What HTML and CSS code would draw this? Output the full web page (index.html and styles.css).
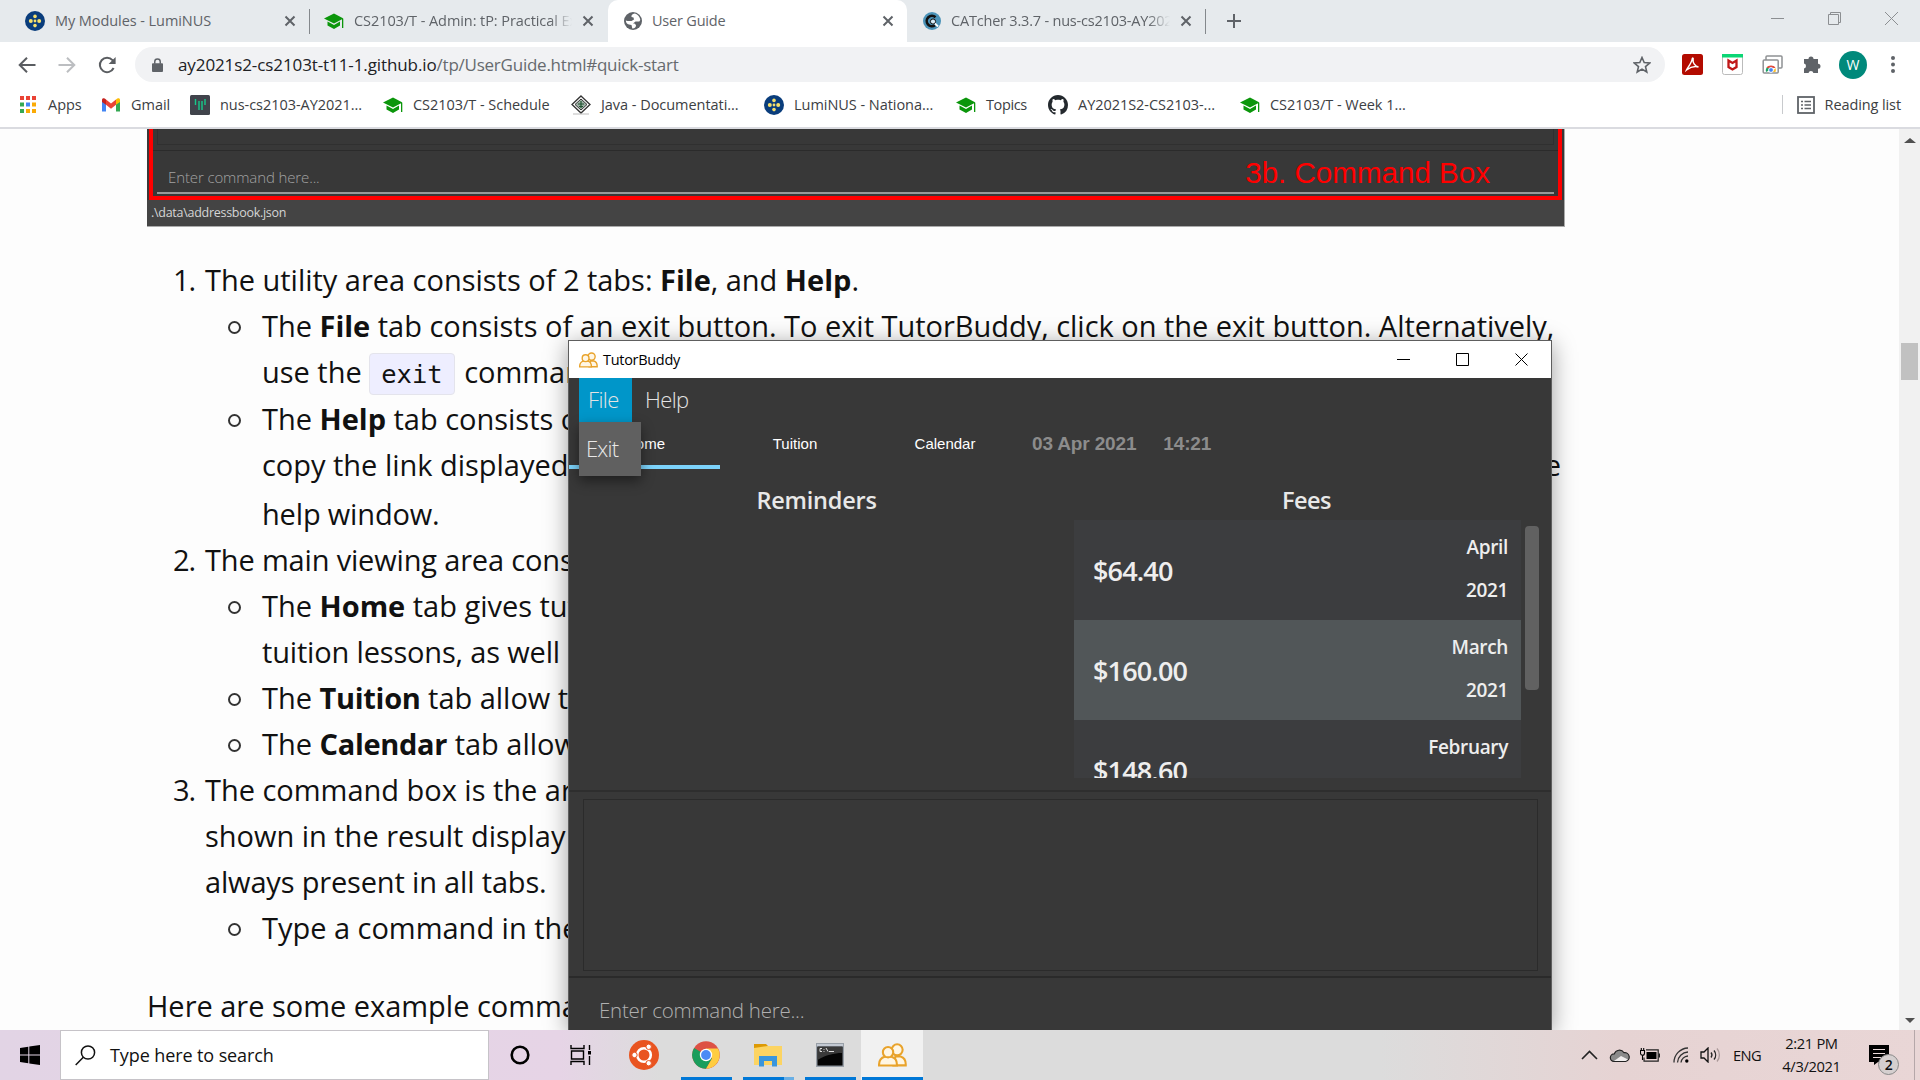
FILE: index.html
```html
<!DOCTYPE html>
<html lang="en">
<head>
<meta charset="utf-8">
<title>User Guide</title>
<link rel="stylesheet" href="styles.css">
</head>
<body>
<svg class="defs" width="0" height="0">
  <symbol id="lumi" viewBox="0 0 20 20"><circle cx="10" cy="10" r="10" fill="#0a3d7c"/><g fill="#f7e06a"><circle cx="10" cy="5.4" r="1.8"/><circle cx="10" cy="14.6" r="1.8"/><circle cx="10" cy="10" r="1.4"/><circle cx="5.8" cy="10" r="2"/><circle cx="14.2" cy="10" r="2"/></g></symbol>
  <symbol id="cap" viewBox="0 0 20 20"><g fill="#0b960b"><path d="M0 7.500 10 2.500l9.500 5L10 12.500z"/><path d="M3.500 10.500v4L10 18l6-3.500v-4L10 14z"/><path d="M18 8h1.300v9H18z"/></g></symbol>
  <symbol id="x" viewBox="0 0 12 12"><path d="M1.500 1.500l9 9M10.500 1.500l-9 9" stroke="#5f6368" stroke-width="2" fill="none"/></symbol>
  <symbol id="people" viewBox="0 0 28 23"><g fill="#fff6e4" stroke="#e9a32b" stroke-width="2"><path d="M15 21.500h11.800c.2-4.500-1.500-7.500-5-8.500h-5z"/><circle cx="18.500" cy="6.500" r="5.300"/><path d="M1 21.700c-.2-5 1.500-7.500 5.500-8.500h6.500c4 1 5.500 3.500 5.300 8.500z"/><circle cx="9.700" cy="8.800" r="5"/></g></symbol>
</svg>

<header class="chrome">
  <div class="tabs">
    <div class="tab t1"><svg class="i20"><use href="#lumi"/></svg><span class="lbl">My Modules - LumiNUS</span><svg class="x"><use href="#x"/></svg></div>
    <i class="sep"></i>
    <div class="tab t2"><svg class="i20"><use href="#cap"/></svg><span class="lbl fade">CS2103/T - Admin: tP: Practical Exam</span><svg class="x"><use href="#x"/></svg></div>
    <div class="tab active"><svg class="i18" viewBox="0 0 18 18"><circle cx="9" cy="9" r="9" fill="#5f6368"/><path d="M10.500 1.500C8.500 2 7 3.200 7.500 5l2 .5.500 2L7.500 9H3.500L1.800 8.500C2 11 3 12 5 12.500l2.500.5.800 3.500C11 16.500 12 15 12 13l-1.500-1.500H9l2.500-2h3.800l1-1.500C16 5 13.500 2 10.500 1.500z" fill="#fff"/></svg><span class="lbl">User Guide</span><svg class="x"><use href="#x"/></svg></div>
    <div class="tab t4"><svg class="i18" viewBox="0 0 18 18"><circle cx="9" cy="9" r="9" fill="#4b93b8"/><path d="M12.500 5.200A5.200 5.200 0 1 0 12 13.200" fill="none" stroke="#111" stroke-width="2.600"/><circle cx="10" cy="9.500" r="2.600" fill="#d7ecf7" stroke="#111" stroke-width="1"/><path d="M12 11.500l3 3" stroke="#fff" stroke-width="1.800"/></svg><span class="lbl fade">CATcher 3.3.7 - nus-cs2103-AY2021</span><svg class="x"><use href="#x"/></svg></div>
    <i class="sep"></i>
    <svg class="plus" viewBox="0 0 16 16"><path d="M8 1v14M1 8h14" stroke="#5f6368" stroke-width="2"/></svg>
    <div class="winctl">
      <svg viewBox="0 0 13 13"><path d="M0 6.500h13" stroke="#8c8f92"/></svg>
      <svg viewBox="0 0 13 13"><path d="M.5 2.500h10v10H.5zM2.500 2.500v-2h10v10h-2" fill="none" stroke="#8c8f92"/></svg>
      <svg viewBox="0 0 13 13"><path d="M0 0l13 13M13 0L0 13" stroke="#8c8f92"/></svg>
    </div>
  </div>
  <div class="toolbar">
    <div class="nav">
      <svg viewBox="0 0 18 18"><path d="M17.500 9H2M9 1.700L1.700 9 9 16.300" fill="none" stroke="#5a5d61" stroke-width="2"/></svg>
      <svg viewBox="0 0 18 18"><path d="M.5 9H16M9 1.700L16.300 9 9 16.300" fill="none" stroke="#bcbec1" stroke-width="2"/></svg>
      <svg viewBox="0 0 18 18"><path d="M15.600 12A7.200 7.200 0 1 1 14.500 4.200L16 6" fill="none" stroke="#5a5d61" stroke-width="2"/><path d="M17.600 1v7h-7z" fill="#5a5d61"/></svg>
    </div>
    <div class="omnibox">
      <svg class="lock" viewBox="0 0 12 15"><path d="M1 5.500h10a1 1 0 0 1 1 1V14a1 1 0 0 1-1 1H1a1 1 0 0 1-1-1V6.500a1 1 0 0 1 1-1z" fill="#5f6368"/><path d="M3 6V4a3 3 0 0 1 6 0v2" fill="none" stroke="#5f6368" stroke-width="1.600"/></svg>
      <span class="url"><b>ay2021s2-cs2103t-t11-1.github.io</b><span>/tp/UserGuide.html#quick-start</span></span>
      <svg class="star" viewBox="0 0 18 18"><path d="M9 1.500l2.200 5 5.500.5-4.200 3.600 1.300 5.400L9 13.100 4.200 16l1.300-5.400L1.300 7l5.500-.5z" fill="none" stroke="#5f6368" stroke-width="1.600"/></svg>
    </div>
    <div class="ext">
      <svg viewBox="0 0 21 21"><rect width="21" height="21" rx="2.500" fill="#b30b00"/><path d="M4.500 16c1-2.500 5-6.500 5.700-11 .2-1.500 1.300-1 .9.500-.6 3 2 7 5.400 7.500-3-.8-8 0-12 3z" fill="none" stroke="#fff" stroke-width="1.500"/></svg>
      <svg viewBox="0 0 21 21"><rect x=".5" y=".5" width="20" height="20" rx="2" fill="#fff" stroke="#bbb"/><path d="M0 0h21v3.500H0z" fill="#0bd675"/><path d="M6.500 6.500v6.500l4 2.500 4-2.500V6.500l-4 2.500z" fill="none" stroke="#c01818" stroke-width="2.300"/></svg>
      <svg viewBox="0 0 21 21"><g fill="#fff" stroke="#8f9194" stroke-width="1.500"><rect x="4" y="2" width="16" height="12" rx="1"/><rect x="1.200" y="6" width="15" height="13" rx="1"/></g><path d="M4 18a5 5 0 0 1 2-5.500l3 3z" fill="#1ea362"/><path d="M4.500 14a5.200 5.200 0 0 1 9 0z" fill="#e14b3c"/><path d="M13.500 14a5 5 0 0 1 0 4H10z" fill="#fbc02d"/><circle cx="9" cy="16" r="2.400" fill="#4285f4" stroke="#fff"/></svg>
      <svg viewBox="0 0 21 21"><path d="M2 5h4.500a2.500 2.500 0 1 1 5 0H16v4.700a2.500 2.500 0 1 1 0 5V19h-4.600a2.500 2.500 0 0 0-4.900 0H2v-4.600a2.500 2.500 0 0 0 0-4.900z" fill="#5f6368"/></svg>
      <span class="avatar">W</span>
      <svg viewBox="0 0 21 21"><g fill="#5f6368"><circle cx="11" cy="4" r="2"/><circle cx="11" cy="10.500" r="2"/><circle cx="11" cy="17" r="2"/></g></svg>
    </div>
  </div>
  <div class="bookmarks">
    <div class="bm"><svg class="i20" viewBox="0 0 20 20"><g fill="#ea4335"><path d="M2 1h4v4H2zM8 1h4v4H8zM14 1h4v4h-4z"/></g><g fill="#34a853"><path d="M2 7.500h4v4H2zM2 14h4v4H2z"/></g><path d="M8 7.500h4v4H8z" fill="#4285f4"/><path d="M14 7.500h4v4h-4zM8 14h4v4H8zM14 14h4v4h-4z" fill="#fbab05"/></svg><span>Apps</span></div>
    <div class="bm"><svg class="i20" viewBox="0 0 20 20"><path d="M1 5v11.500h4V9z" fill="#4285f4"/><path d="M15 9v7.500h4V5z" fill="#34a853"/><path d="M5 4.500l5 4 5-4v5.200l-5 4-5-4z" fill="#ea4335"/><path d="M1 5c0-2.200 2.300-2.500 4-.5v5.200L1 7z" fill="#c5221f"/><path d="M19 5c0-2.200-2.300-2.500-4-.5v5.200L19 7z" fill="#fbbc04"/></svg><span>Gmail</span></div>
    <div class="bm"><svg class="i20" viewBox="0 0 20 20"><rect width="20" height="20" rx="1.500" fill="#40434b"/><path d="M5.500 4v6M9 6v9M12 6v9M15 4v6" stroke="#18c98a" stroke-width="1.400"/></svg><span>nus-cs2103-AY2021...</span></div>
    <div class="bm"><svg class="i20"><use href="#cap"/></svg><span>CS2103/T - Schedule</span></div>
    <div class="bm"><svg class="i20" viewBox="0 0 20 20"><path d="M10 1l9 8.500-9 8.500-9-8.500z" fill="#fff" stroke="#333" stroke-width="1.300"/><path d="M10 4l6 5.500-6 5.500-6-5.500z" fill="#9fb0a6" stroke="#333"/><path d="M7 9h6M8 11.500h4M10 6v7" stroke="#253" stroke-width="1.200"/><path d="M2 19h16" stroke="#bbb"/></svg><span>Java - Documentati...</span></div>
    <div class="bm"><svg class="i20"><use href="#lumi"/></svg><span>LumiNUS - Nationa...</span></div>
    <div class="bm"><svg class="i20"><use href="#cap"/></svg><span class="tight">Topics</span></div>
    <div class="bm"><svg class="i20" viewBox="0 0 16 16"><path fill="#24292e" d="M8 0C3.580 0 0 3.580 0 8c0 3.540 2.290 6.530 5.470 7.590.4.070.55-.17.55-.38 0-.19-.01-.82-.01-1.490-2.010.37-2.530-.49-2.690-.94-.09-.23-.48-.94-.82-1.130-.28-.15-.68-.52-.01-.53.63-.01 1.080.58 1.230.82.72 1.210 1.870.87 2.330.66.070-.52.28-.87.51-1.070-1.780-.2-3.640-.89-3.640-3.950 0-.87.31-1.590.82-2.150-.08-.2-.36-1.020.08-2.120 0 0 .67-.21 2.200.82.64-.18 1.320-.27 2-.27s1.360.09 2 .27c1.530-1.040 2.200-.82 2.200-.82.44 1.100.16 1.920.08 2.120.51.56.82 1.270.82 2.150 0 3.070-1.870 3.750-3.650 3.950.29.25.54.73.54 1.480 0 1.070-.01 1.930-.01 2.200 0 .21.15.46.55.38A8.010 8.010 0 0 0 16 8c0-4.420-3.580-8-8-8z"/></svg><span>AY2021S2-CS2103-...</span></div>
    <div class="bm"><svg class="i20"><use href="#cap"/></svg><span>CS2103/T - Week 1...</span></div>
    <div class="reading"><svg viewBox="0 0 18 18"><rect x="1" y="1" width="16" height="16" fill="none" stroke="#5f6368" stroke-width="1.800"/><path d="M4 5.500h2M4 9h2M4 12.500h2M7.500 5.500H14M7.500 9H14M7.500 12.500H14" stroke="#5f6368" stroke-width="1.500"/></svg><span>Reading list</span></div>
  </div>
</header>

<main class="page">
  <article class="guide">
    <div class="shot">
      <div class="shot-top">
        <div class="shot-result"></div>
        <div class="shot-cmd"><span class="shot-prompt">Enter command here...</span><span class="shot-label">3b. Command Box</span></div>
      </div>
      <div class="shot-status">.\data\addressbook.json</div>
    </div>
    <div class="list">
      <p class="l1"><i class="num">1.</i>The utility area consists of 2 tabs: <strong>File</strong>, and <strong>Help</strong>.</p>
      <p class="l2"><i class="dot"></i>The <strong>File</strong> tab consists of an exit button. To exit TutorBuddy, click on the exit button. Alternatively,</p>
      <p class="l2">use the <code>exit</code> command.</p>
      <p class="l2 gap1"><i class="dot"></i>The <strong>Help</strong> tab consists of</p>
      <p class="l2 spread"><span>copy the link displayed</span><span>the</span></p>
      <p class="l2 gap3 snug">help window.</p>
      <p class="l1 snug"><i class="num">2.</i>The main viewing area consists</p>
      <p class="l2"><i class="dot"></i>The <strong>Home</strong> tab gives tutors</p>
      <p class="l2 snug">tuition lessons, as well</p>
      <p class="l2"><i class="dot"></i>The <strong class="c">Tuition</strong> tab allow tutors</p>
      <p class="l2"><i class="dot"></i>The <strong class="c">Calendar</strong> tab allows</p>
      <p class="l1"><i class="num">3.</i>The command box is the area</p>
      <p class="l1">shown in the result display</p>
      <p class="l1 snug">always present in all tabs.</p>
      <p class="l2"><i class="dot"></i>Type a command in the</p>
    </div>
    <p class="after">Here are some example commands</p>
  </article>
  <aside class="scroll"><i class="up"></i><i class="thumb"></i><i class="down"></i></aside>
</main>

<section class="app">
  <div class="titlebar"><svg class="people"><use href="#people"/></svg><span>TutorBuddy</span>
    <div class="appctl">
      <svg viewBox="0 0 13 13"><path d="M0 6.500h13" stroke="#000"/></svg>
      <svg viewBox="0 0 13 13"><path d="M.5.5h12v12H.5z" fill="none" stroke="#000"/></svg>
      <svg viewBox="0 0 13 13"><path d="M.5.500l12 12M12.500.5l-12 12" stroke="#000"/></svg>
    </div>
  </div>
  <div class="menubar"><span class="file">File</span><span class="help">Help</span></div>
  <div class="apptabs"><span class="at on">Home</span><span class="at">Tuition</span><span class="at">Calendar</span><b>03 Apr 2021</b><b>14:21</b></div>
  <div class="panes">
    <div class="pane"><h2>Reminders</h2></div>
    <div class="pane fees"><h2>Fees</h2>
      <div class="feewrap">
        <div class="feelist">
          <div class="fee"><b>$64.40</b><div><span>April</span><span>2021</span></div></div>
          <div class="fee alt"><b>$160.00</b><div><span>March</span><span>2021</span></div></div>
          <div class="fee"><b>$148.60</b><div><span>February</span><span>2021</span></div></div>
        </div>
        <i class="bar"></i>
      </div>
    </div>
  </div>
  <div class="result"><div></div></div>
  <div class="cmd">Enter command here...</div>
  <div class="menu">Exit</div>
</section>

<footer class="taskbar">
  <div class="start"><svg viewBox="0 0 20 20"><path d="M0 3l8.300-1.200v7.700H0zM9.300 1.600L20 0v9.500H9.300zM0 10.500h8.300v7.700L0 17zM9.300 10.500H20V20L9.300 18.400z"/></svg></div>
  <div class="search"><svg viewBox="0 0 21 21"><circle cx="13" cy="7.500" r="6.600" fill="none" stroke="#111" stroke-width="1.500"/><path d="M8.300 12.300L.7 20" stroke="#111" stroke-width="1.500"/></svg><span>Type here to search</span></div>
  <div class="apps">
    <div class="ico cort"><svg width="20" height="20" viewBox="0 0 20 20"><circle cx="10" cy="10" r="8.300" fill="none" stroke="#000" stroke-width="2.600"/></svg></div>
    <div class="ico"><svg width="22" height="20" viewBox="0 0 22 20"><path d="M1 0v3.500h13V0M1.500 6h12v8h-12zM1 20v-3.500h13V20M19.500 0v5M19.500 11v9" fill="none" stroke="#000" stroke-width="1.400"/><path d="M18 6h3v3.500h-3z"/></svg></div>
    <div class="ico ubu"><svg width="30" height="30" viewBox="0 0 30 30"><circle cx="15" cy="15" r="15" fill="#e95420"/><circle cx="15" cy="15" r="6.800" fill="none" stroke="#fff" stroke-width="2.600"/><g fill="#fff" stroke="#e95420" stroke-width="1"><circle cx="5.500" cy="15" r="2.700"/><circle cx="19.700" cy="6.800" r="2.700"/><circle cx="19.700" cy="23.200" r="2.700"/></g></svg></div>
    <div class="ico run"><svg width="28" height="28" viewBox="0 0 28 28"><circle cx="14" cy="14" r="13.800" fill="#dd5144"/><path d="M14 14L2.100 7A13.800 13.800 0 0 0 14 27.800l6-10.300z" fill="#1a9e5c"/><path d="M14 27.800A13.800 13.800 0 0 0 26 7.500H14l6 10z" fill="#ffcd41"/><circle cx="14" cy="14" r="6.200" fill="#fff"/><circle cx="14" cy="14" r="4.900" fill="#4c8bf5"/></svg></div>
    <div class="ico run two"><svg width="28" height="24" viewBox="0 0 28 24"><path d="M0 1h12l2 2v5H0z" fill="#dd9a05"/><path d="M0 5l14-2h14v19H0z" fill="#fcd462"/><path d="M5 23.500V13h18v10.500h-5V18h-8v5.500z" fill="#3a96dd"/></svg></div>
    <div class="ico run"><svg width="28" height="24" viewBox="0 0 28 24"><rect x=".7" y=".7" width="26.600" height="22.600" fill="#050505" stroke="#99a0a8" stroke-width="1.500"/><path d="M1 1h26v2.500H1z" fill="#c3c9d2"/><path d="M1.500 4H26v6C18 10 10 12 1.500 17z" fill="#3a3a3a"/><path d="M6 5.500H4v3h2M8 6v.8M8 8v.8M10 5l2 3.500M13 8.500h5" stroke="#ddd" fill="none"/></svg></div>
    <div class="ico run cur"><svg width="29" height="24"><use href="#people"/></svg></div>
  </div>
  <div class="tray">
    <svg class="chev" viewBox="0 0 17 10"><path d="M1 9l7.500-7.500L16 9" fill="none" stroke="#222" stroke-width="1.600"/></svg>
    <svg class="cloud" viewBox="0 0 20 15"><path d="M4.500 13.500a3.800 3.800 0 0 1 .3-7.600 5.400 5.400 0 0 1 9.700-1.200 4.400 4.400 0 0 1 1.500 8.800z" fill="#8b8b8b" stroke="#222" stroke-width="1.200"/><path d="M4.500 13l7-5 7 3.500-2.500 1.500z" fill="#f1eeee"/></svg>
    <svg class="batt" viewBox="0 0 20 14"><path d="M6.500 4h10v7h-10z"/><path d="M6 1.800h12.200v11.400H4V9.500M19.500 5.500v4" fill="none" stroke="#222" stroke-width="1.200"/><path d="M.5 2.500h4v2.700a2 2 0 0 1-4 0zM1.300 0v2.500M3.700 0v2.500M2.500 7.500v4.500" fill="#e6d4d4" stroke="#000" stroke-width="1.100"/></svg>
    <svg class="wifi" viewBox="0 0 16 16"><g fill="none" stroke="#333" stroke-width="1.300"><path d="M1 15.500A14.500 14.500 0 0 1 15 1"/><path d="M4.500 15.500A11 11 0 0 1 15 5"/><path d="M8 15.500A7.500 7.500 0 0 1 15 9"/></g><circle cx="13.800" cy="14" r="1.700"/></svg>
    <svg class="vol" viewBox="0 0 21 16"><path d="M1 5h3l4-4v14l-4-4H1z" fill="none" stroke="#111" stroke-width="1.300"/><path d="M11 5.500a4 4 0 0 1 0 5M14 3.500a7 7 0 0 1 0 9" fill="none" stroke="#222" stroke-width="1.300"/><path d="M17 1.500a10 10 0 0 1 0 13" fill="none" stroke="#a99" stroke-width="1.300"/></svg>
    <span class="eng">ENG</span>
    <div class="clock"><span>2:21 PM</span><span>4/3/2021</span></div>
    <div class="note"><svg viewBox="0 0 20 20"><path d="M0 0h20v17H9l-4 3v-3H0z"/><path d="M4 4.500h12M4 8.500h12M4 12.500h8" stroke="#eadada" stroke-width="1.200"/></svg><b>2</b></div>
  </div>
</footer>
</body>
</html>
```
FILE: styles.css
```css
* { box-sizing: border-box; }
body {
  margin: 0;
  width: 1920px;
  height: 1080px;
  overflow: hidden;
  position: relative;
  display: flex;
  flex-direction: column;
  font-family: "Open Sans", "Noto Sans", sans-serif;
  color: #111;
  background: #fdfdfd;
}
p, h2 { margin: 0; }
svg { display: block; flex: none; }
i { font-style: normal; }
.defs { display: none; }
.i20 { width: 20px; height: 20px; }
.i18 { width: 18px; height: 18px; }

/* browser chrome */
.chrome { height: 129px; flex: none; background: #fff; border-bottom: 2px solid #dadbe0; font-size: 14.5px; white-space: nowrap; }
.tabs { height: 42px; background: #e6eaed; display: flex; align-items: center; color: #5f6368; }
.tab { height: 42px; padding-bottom: 1px; display: flex; align-items: center; gap: 10px; }
.tab .lbl { flex: 1; overflow: hidden; letter-spacing: -.07px; }
.tab .fade { mask-image: linear-gradient(90deg, #000 90%, transparent 100%); }
.x { width: 12px; height: 12px; }
.t1 { width: 309px; padding-left: 25px; padding-right: 13px; }
.t2 { width: 298px; padding-left: 14px; padding-right: 14px; }
.active { width: 299px; padding-left: 16px; padding-right: 13px; background: #fff; border-radius: 10px 10px 0 0; }
.t4 { width: 298px; padding-left: 16px; padding-right: 13px; }
.t4 .lbl, .active .lbl { letter-spacing: -.2px; }
.sep { width: 1px; height: 25px; background: #84888c; }
.plus { width: 16px; height: 16px; margin-left: 20px; }
.winctl { margin-left: auto; display: flex; gap: 44px; padding-right: 22px; margin-top: -6px; }
.winctl svg { width: 13px; height: 13px; }

.toolbar { height: 45px; display: flex; align-items: center; }
.nav { width: 135px; padding-left: 18px; display: flex; gap: 22px; }
.nav svg { width: 18px; height: 18px; }
.omnibox { width: 1530px; height: 35px; border-radius: 18px; background: #f1f2f4; display: flex; align-items: center; padding: 0 14px 0 17px; }
.lock { width: 11px; height: 14px; }
.url { margin-left: 15px; flex: 1; font-size: 17px; color: #666a6e; letter-spacing: -.24px; }
.url b { font-weight: 400; color: #202124; letter-spacing: -.1px; }
.star { width: 18px; height: 18px; }
.ext { display: flex; align-items: center; gap: 19px; margin-left: 17px; }
.ext svg { width: 21px; height: 21px; }
.avatar { width: 28px; height: 28px; margin: 0 -4px 0 -3px; border-radius: 50%; background: #00897b; color: #fff; font-size: 14px; line-height: 28px; text-align: center; }

.bookmarks { height: 35px; padding-left: 18px; display: grid; grid-template-columns: 83px 89px 193px 188px 193px 192px 92px 192px 1fr auto; align-items: center; color: #3c4043; }
.bm { display: flex; align-items: center; gap: 10px; letter-spacing: -.04px; }
.bm .tight { letter-spacing: -.4px; }
.reading { display: flex; align-items: center; gap: 10px; border-left: 1px solid #c8cacd; padding: 0 19px 0 14px; letter-spacing: -.1px; }
.reading svg { width: 18px; height: 18px; }

/* page */
.page { flex: 1; min-height: 0; overflow: hidden; display: flex; justify-content: space-between; }
.guide { padding-left: 147px; font-size: 29px; line-height: 46px; white-space: nowrap; letter-spacing: -.02px; }
.shot { width: 1418px; height: 98px; background: #383838; border: solid #aaa; border-width: 0 1px 1px 0; }
.shot-top { height: 71px; margin: 0 2px; border: 4px solid #f00; border-top: 0; padding: 0 4px; }
.shot-result { height: 16px; border: 1px solid #303030; border-top: 0; }
.shot-cmd { height: 44px; margin: 5px -4px 0; padding: 8px 68px 0 15px; display: flex; justify-content: space-between; align-items: center; border-top: 1px solid #2b2b2b; background: linear-gradient(#999, #999) center bottom / calc(100% - 8px) 2px no-repeat; }
.shot-prompt { font-size: 15px; font-weight: 300; letter-spacing: -.12px; color: #a2a2a2; line-height: 24px; }
.shot-label { font: 29.6px/24px "Liberation Sans", sans-serif; color: #f00; margin-top: -7px; }
.shot-status { height: 26px; background: #444; color: #d5d5d5; font-size: 12.5px; letter-spacing: -.28px; line-height: 26px; padding-left: 4px; }
.list { padding-top: 30px; }
.l1 { padding-left: 58px; height: 46px; }
.l2 { padding-left: 115px; height: 46px; }
.gap1 { margin-top: 1px; }
.gap3 { margin-top: 3px; }
.snug { letter-spacing: -.17px; }
.num { display: inline-block; width: 40px; margin-left: -40px; padding-left: 8px; letter-spacing: -1px; }
.dot { display: inline-block; width: 13px; height: 13px; border: 2px solid #333; border-radius: 50%; margin: 0 21px 3px -34px; }
.spread { width: 1414px; display: flex; justify-content: space-between; }
strong { font-weight: 700; letter-spacing: 0; }
strong.c { letter-spacing: -.3px; }
code { display: inline-block; height: 42px; margin: 0 2px 0 0; padding: 0 11px; font: 25.5px/40px "DejaVu Sans Mono", monospace; background: #eef; border: 1px solid #e4e4ec; border-radius: 4px; letter-spacing: 0; }
.after { margin-top: 32px; }
.scroll { width: 21px; background: #f1f1f1; display: flex; flex-direction: column; align-items: center; }
.up { margin-top: 9px; border: 6px solid transparent; border-top: 0; border-bottom: 5px solid #505050; }
.thumb { width: 17px; height: 37px; margin-top: 200px; background: #c1c1c1; }
.down { margin: auto 0 7px; border: 5px solid transparent; border-bottom: 0; border-top-color: #505050; }

/* application window */
.app { position: absolute; left: 568px; top: 340px; width: 984px; height: 690px; border: 1px solid #5e5e5e; border-bottom: 0; background: #383838; box-shadow: 0 4px 22px rgba(0,0,0,.38); clip-path: inset(-30px -30px 0 -30px); display: flex; flex-direction: column; }
.titlebar { height: 37px; flex: none; background: #fff; color: #000; font-size: 14.5px; letter-spacing: -.3px; display: flex; align-items: center; padding: 0 23px 0 10px; gap: 5px; }
.people { width: 19px; height: 16px; }
.appctl { margin-left: auto; display: flex; gap: 46px; }
.appctl svg { width: 13px; height: 13px; }
.menubar { height: 45px; padding-left: 10px; display: flex; font-size: 22px; font-weight: 300; letter-spacing: -.6px; line-height: 42px; color: #e4e4e4; }
.file { width: 53px; padding-left: 9px; background: #0096c9; }
.help { padding-left: 13px; }
.apptabs { height: 46px; display: flex; font: 15px/41px "Liberation Sans", sans-serif; color: #fff; align-items: flex-start; }
.at { width: 150px; height: 46px; text-align: center; }
.at.on { width: 151px; padding-left: 1px; border-bottom: 4px solid #7cd3fb; }
.apptabs b { font-size: 19px; letter-spacing: -.15px; color: #8c8c8c; margin-left: 12px; }
.apptabs b + b { margin-left: 27px; }
.panes { height: 321px; display: flex; }
.pane { width: 495px; }
.pane h2 { font-size: 23.5px; font-weight: 600; letter-spacing: -.22px; line-height: 32px; padding-top: 15px; height: 51px; text-align: center; color: #e8e8e8; }
.fees { width: 487px; padding-left: 10px; }
.fees h2 { padding-right: 12px; letter-spacing: -.5px; }
.feewrap { display: flex; gap: 4px; height: 258px; }
.feelist { width: 447px; overflow: hidden; }
.fee { height: 100px; background: #3c3d3f; padding: 0 13px 0 19px; display: flex; justify-content: space-between; align-items: center; color: #eee; }
.fee.alt { background: #515658; }
.fee b { font-size: 27px; font-weight: 600; letter-spacing: -.85px; }
.fee div { display: flex; flex-direction: column; gap: 18px; margin-top: -3px; text-align: right; font-size: 19px; font-weight: 600; letter-spacing: -.35px; line-height: 25px; }
.bar { width: 14px; height: 164px; margin-top: 6px; border-radius: 4px; background: #616161; }
.result { height: 188px; border-top: 2px solid #2e2e2e; border-bottom: 2px solid #2a2a2a; padding: 7px 13px 7px 14px; }
.result div { height: 172px; border: 1px solid #2b2b2b; }
.cmd { padding: 16px 0 0 30px; font-size: 20.5px; font-weight: 300; letter-spacing: -.25px; line-height: 32px; color: #b0b0b0; }
.menu { position: absolute; left: 10px; top: 81px; width: 62px; height: 54px; background: #606060; color: #e8e8e8; font-size: 22px; font-weight: 300; letter-spacing: -.8px; line-height: 52px; padding-left: 7px; box-shadow: 0 5px 12px rgba(0,0,0,.45); }

/* taskbar */
.taskbar { height: 50px; flex: none; display: flex; background: linear-gradient(90deg, #e2d4e5 0, #e6d4e6 560px, #dcdcdc 660px, #dcdcdc 1380px, #e6d3d3 1620px, #e9d6d6 100%); color: #111; }
.start { width: 60px; display: flex; align-items: center; justify-content: center; }
.start svg { width: 20px; height: 20px; }
.search { width: 429px; height: 50px; background: #fff; border: 1px solid #c6c3c8; display: flex; align-items: center; gap: 14px; padding-left: 14px; font-size: 18px; letter-spacing: -.1px; }
.search svg { width: 21px; height: 21px; }
.apps { display: flex; }
.ico { width: 62px; display: flex; justify-content: center; align-items: center; }
.cort { width: 61px; }
.cort + .ico { width: 61px; }
.ubu { width: 64px; padding-left: 1px; }
.run { background: linear-gradient(#0078d7, #0078d7) center bottom / 51px 3px no-repeat; }
.two { background: linear-gradient(90deg, #0078d7 41px, #69afe5 41px) center bottom / 51px 3px no-repeat; }
.cur { background: linear-gradient(#0078d7, #0078d7) center bottom / 61px 3px no-repeat, #f1f1f1; }
.tray { margin-left: auto; display: flex; align-items: center; padding-right: 5px; font-size: 14.7px; letter-spacing: -.35px; }
.chev { width: 17px; height: 10px; margin-right: 11px; }
.cloud { width: 21px; height: 15px; margin-right: 10px; }
.batt { width: 20px; height: 14px; margin-right: 13px; }
.wifi { width: 16px; height: 16px; margin-right: 11px; }
.vol { width: 21px; height: 16px; margin-right: 12px; }
.eng { width: 48px; letter-spacing: -.6px; }
.clock { width: 61px; display: flex; flex-direction: column; align-items: center; line-height: 23px; }
.note { position: relative; width: 46px; height: 50px; margin-left: 27px; padding-top: 15px; border-right: 1px solid #b5a7a9; }
.note svg { width: 20px; height: 20px; }
.note b { position: absolute; left: 9px; top: 24px; width: 21px; height: 21px; border: 1px solid #888; border-radius: 50%; background: #d5cfcf; font-size: 14px; font-weight: 600; line-height: 19px; text-align: center; }
```
